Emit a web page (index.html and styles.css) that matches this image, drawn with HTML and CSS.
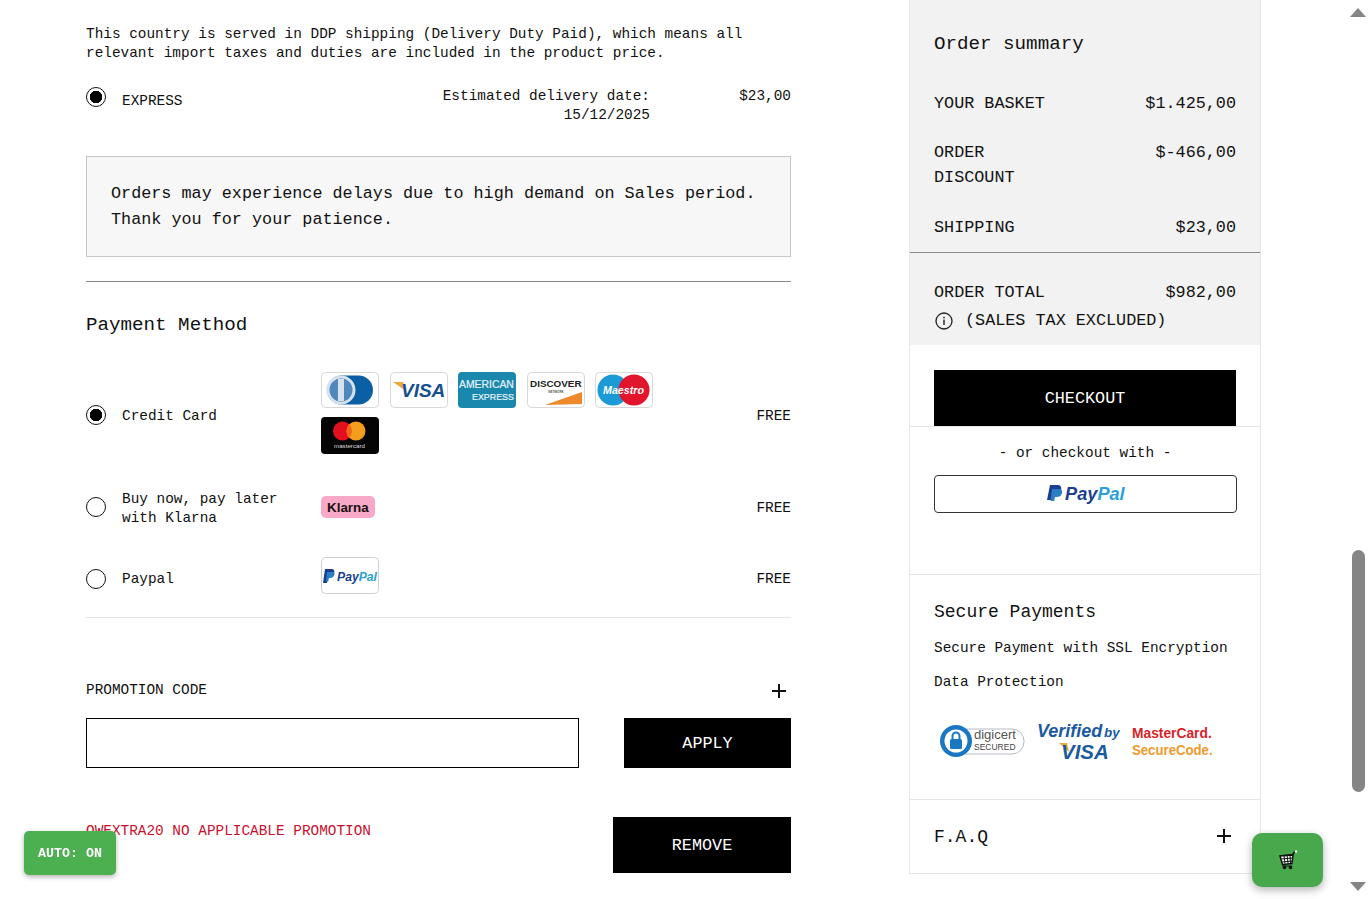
FILE: index.html
```html
<!DOCTYPE html>
<html lang="en">
<head>
    <meta charset="UTF-8">
    <meta name="viewport" content="width=device-width, initial-scale=1.0">
    <title>Checkout</title>
    <link rel="stylesheet" href="styles.css">
</head>
<body>
    <div class="page">
        <main class="checkout-left">
            <p class="ddp-note">This country is served in DDP shipping (Delivery Duty Paid), which means all relevant import taxes and duties are included in the product price.</p>

            <div class="shipping-row">
                <span class="radio checked"></span>
                <span class="shipping-name">EXPRESS</span>
                <span class="shipping-date">Estimated delivery date:<br>15/12/2025</span>
                <span class="shipping-price">$23,00</span>
            </div>

            <div class="delay-box">Orders may experience delays due to high demand on Sales period. Thank you for your patience.</div>

            <h2 class="section-title">Payment Method</h2>

            <div class="pay-row pay-row-card">
                <span class="radio checked"></span>
                <span class="pay-name">Credit Card</span>
                <div class="pay-logos">
                    <svg class="card" viewBox="0 0 58 36"><rect x=".5" y=".5" width="57" height="35" rx="4" fill="#fff" stroke="#d8d8d8"/><rect x="6" y="3.500" width="46" height="29" rx="14.500" fill="#0b5fa5"/><circle cx="20" cy="18" r="14.500" fill="#d5e2ee"/><circle cx="20" cy="18" r="11.500" fill="#4f88bb"/><rect x="17" y="7" width="6" height="22" fill="#d5e2ee"/></svg>
                    <svg class="card" viewBox="0 0 58 36"><rect x=".5" y=".5" width="57" height="35" rx="4" fill="#fff" stroke="#d8d8d8"/><path d="M3 10h10l3 9z" fill="#f0a83a"/><text x="11" y="25" class="logo-text visa-text">VISA</text></svg>
                    <svg class="card" viewBox="0 0 58 36"><rect width="58" height="36" rx="4" fill="#1a87ad"/><text x="1" y="16" class="logo-text amex-text">AMERICAN</text><text x="14" y="28" class="logo-text amex-text amex-small">EXPRESS</text></svg>
                    <svg class="card" viewBox="0 0 58 36"><rect x=".5" y=".5" width="57" height="35" rx="4" fill="#fff" stroke="#d8d8d8"/><path d="M18 33L55 32V20z" fill="#ee8a2c"/><text x="3" y="15" class="logo-text disc-text">DISCOVER</text><text x="29" y="21" class="logo-text disc-small" text-anchor="middle">NETWORK</text></svg>
                    <svg class="card" viewBox="0 0 58 36"><rect x=".5" y=".5" width="57" height="35" rx="4" fill="#fff" stroke="#d8d8d8"/><circle cx="18" cy="18" r="15.500" fill="#1b9ad6"/><circle cx="39" cy="18" r="15.500" fill="#e2152c"/><text x="8" y="22" class="logo-text maestro-text">Maestro</text></svg>
                    <svg class="card card-tall" viewBox="0 0 58 37"><rect width="58" height="37" rx="4" fill="#050505"/><circle cx="21.500" cy="14" r="9.500" fill="#e2101f"/><circle cx="35" cy="14" r="9.500" fill="#f59d1d"/><path d="M28.250 7.300a9.500 9.500 0 0 1 0 13.400a9.500 9.500 0 0 1 0-13.400z" fill="#f2661c"/><text x="13" y="31" class="logo-text mc-text">mastercard</text></svg>
                </div>
                <span class="pay-free">FREE</span>
            </div>

            <div class="pay-row pay-row-klarna">
                <span class="radio"></span>
                <span class="pay-name">Buy now, pay later<br>with Klarna</span>
                <div class="pay-logos">
                    <svg class="klarna" viewBox="0 0 54 22"><rect width="54" height="22" rx="5" fill="#f9a9c8"/><text x="6" y="16" class="logo-text klarna-text">Klarna</text></svg>
                </div>
                <span class="pay-free">FREE</span>
            </div>

            <div class="pay-row pay-row-paypal">
                <span class="radio"></span>
                <span class="pay-name">Paypal</span>
                <div class="pay-logos">
                    <svg class="card card-tall" viewBox="0 0 58 37"><rect x=".5" y=".5" width="57" height="36" rx="4" fill="#fff" stroke="#cfcfcf"/><path d="M4 12h6c3 0 4 2 3 4.500c-1 2.500-3 3.500-6 3.500l-1 6H2z" fill="#1b3f8f"/><path d="M6 15h6c1.500 0 1.800 1.500 1.300 3c-.8 2.500-2.800 3-5.300 3l-.8 3.500H5z" fill="#2a7fc4"/><text x="16" y="24" class="logo-text pp-small"><tspan fill="#1b3f8f">Pay</tspan><tspan fill="#2a9fd8">Pal</tspan></text></svg>
                </div>
                <span class="pay-free">FREE</span>
            </div>

            <div class="promo-head">
                <span>PROMOTION CODE</span>
                <span class="plus"></span>
            </div>
            <div class="promo-form">
                <input type="text" class="promo-input">
                <button class="black-btn apply-btn">APPLY</button>
            </div>
            <div class="promo-applied">
                <span class="promo-error">OWEXTRA20 NO APPLICABLE PROMOTION</span>
                <button class="black-btn remove-btn">REMOVE</button>
            </div>
        </main>

        <aside class="checkout-right">
            <section class="summary">
                <h2 class="section-title">Order summary</h2>
                <div class="sum-row"><span>YOUR BASKET</span><span>$1.425,00</span></div>
                <div class="sum-row sum-discount"><span>ORDER<br>DISCOUNT</span><span>$-466,00</span></div>
                <div class="sum-row sum-shipping"><span>SHIPPING</span><span>$23,00</span></div>
                <div class="sum-total">
                    <div class="sum-row"><span>ORDER TOTAL</span><span>$982,00</span></div>
                    <div class="tax-note">
                        <svg viewBox="0 0 18 18" width="18" height="18"><circle cx="9" cy="9" r="8" fill="none" stroke="#222" stroke-width="1.300"/><rect x="8.300" y="7.500" width="1.400" height="5.500" fill="#222"/><rect x="8.300" y="4.800" width="1.400" height="1.500" fill="#222"/></svg>
                        <span>(SALES TAX EXCLUDED)</span>
                    </div>
                </div>
            </section>

            <section class="checkout-actions">
                <button class="black-btn checkout-btn">CHECKOUT</button>
            </section>

            <section class="express-pay">
                <p class="or-text">- or checkout with -</p>
                <div class="paypal-btn">
                    <svg viewBox="0 0 78 22" width="78" height="22"><path d="M3 2h7c3.500 0 5 2 4 5c-1 3-3 4.500-6.500 4.500H6L5 17H0z" fill="#1b3f8f"/><path d="M5 6h7c2.500 0 3.500 1.500 3 4c-.8 3-2.800 4-5.300 4H8l-.8 4H3.500z" fill="#2a7fc4"/><text x="18" y="17" class="logo-text pp-big"><tspan fill="#1b3f8f">Pay</tspan><tspan fill="#2a9fd8">Pal</tspan></text></svg>
                </div>
            </section>

            <section class="secure">
                <h2 class="section-title">Secure Payments</h2>
                <p>Secure Payment with SSL Encryption</p>
                <p>Data Protection</p>
                <div class="secure-logos">
                    <svg viewBox="0 0 86 34" width="86" height="34"><rect x="14" y="5" width="71" height="25" rx="12" fill="#fff" stroke="#b5bcc4"/><circle cx="17" cy="17" r="16" fill="#1c77c3"/><circle cx="17" cy="17" r="11.500" fill="#fff"/><rect x="11" y="15" width="12" height="10" rx="1.500" fill="#1c77c3"/><path d="M13.500 15v-3a3.500 3.500 0 0 1 7 0v3" fill="none" stroke="#1c77c3" stroke-width="2"/><text x="35" y="15" class="logo-text digi-top">digicert</text><text x="35" y="26" class="logo-text digi-bottom">SECURED</text></svg>
                    <svg viewBox="0 0 84 44" width="84" height="44"><text x="1" y="18" class="logo-text vbv-top">Verified</text><text x="68" y="18" class="logo-text vbv-by">by</text><path d="M23 24h8l2 9z" fill="#f0a83a"/><text x="25" y="40" class="logo-text vbv-visa">VISA</text></svg>
                    <svg viewBox="0 0 84 36" width="84" height="36"><text transform="translate(1 14.500) scale(.92 1)" class="logo-text msc-top">MasterCard.</text><text transform="translate(1 32) scale(.88 1)" class="logo-text msc-bottom">SecureCode.</text></svg>
                </div>
            </section>

            <section class="faq">
                <span>F.A.Q</span>
                <span class="plus"></span>
            </section>
        </aside>
    </div>

    <div class="fake-scrollbar">
        <span class="arrow-up"></span>
        <span class="scroll-thumb"></span>
        <span class="arrow-down"></span>
    </div>

    <button class="auto-btn">AUTO: ON</button>
    <button class="cart-btn">
        <svg viewBox="0 0 20 20" width="20" height="20"><path d="M2 6l12.500-1.500l3-3.500" fill="none" stroke="#111" stroke-width="1.500"/><circle cx="18" cy="1.500" r="1.200" fill="#fff"/><path d="M2 6l2.500 8.500l9.500-1l1-8.500z" fill="#fff" stroke="#111" stroke-width="1.500"/><path d="M3 9l11-1M4 12l10-1M6 5.500l1 8M9 5l1 8M12 5l.5 8" stroke="#111"/><path d="M4.500 14.500l.5 1.500h9" fill="none" stroke="#111" stroke-width="1.200"/><circle cx="6.500" cy="17.500" r="1.800" fill="#111"/><circle cx="12.500" cy="17.500" r="1.800" fill="#111"/></svg>
    </button>
</body>
</html>
```

FILE: styles.css
```css
html, body {
    margin: 0;
    height: 899px;
    overflow: hidden;
    background-color: #ffffff;
}

body {
    font-family: "Liberation Mono", monospace;
    font-size: 14.4px;
    color: #111111;
}

p {
    margin: 0;
}

.page {
    display: flex;
    gap: 118px;
    padding-left: 86px;
}

.section-title {
    margin: 0;
    font-size: 19.2px;
    font-weight: normal;
    line-height: 24px;
}

.logo-text {
    font-family: "Liberation Sans", sans-serif;
    font-weight: bold;
}

/* Left column */
.checkout-left {
    width: 705px;
    padding-top: 25px;
}

.ddp-note {
    line-height: 19px;
}

.radio {
    flex: none;
    box-sizing: border-box;
    width: 20px;
    height: 20px;
    border: 1.5px solid #111111;
    border-radius: 50%;
    background-color: #ffffff;
}

.radio.checked {
    background: radial-gradient(circle, #000000 0 6px, #ffffff 6.5px);
}

.shipping-row {
    display: flex;
    align-items: flex-start;
    margin-top: 24px;
    height: 69px;
    line-height: 19px;
}

.shipping-name {
    margin: 5px 0 0 16px;
    width: 213px;
}

.shipping-date {
    width: 315px;
    text-align: right;
}

.shipping-price {
    flex: 1;
    text-align: right;
}

.delay-box {
    box-sizing: border-box;
    height: 101px;
    padding: 24px 24px 0;
    border: 1px solid #c8c8c8;
    background-color: #f7f7f7;
    font-size: 16.8px;
    line-height: 26px;
}

.checkout-left .section-title {
    margin-top: 24px;
    padding-top: 31px;
    border-top: 1px solid #8a8a8a;
}

.pay-row {
    display: flex;
    align-items: center;
}

.pay-row-card {
    margin-top: 35px;
    height: 86px;
}

.pay-row-klarna {
    margin-top: 30px;
    height: 38px;
}

.pay-row-paypal {
    margin-top: 31px;
    height: 42px;
}

.pay-row-card .pay-logos,
.pay-row-paypal .pay-logos {
    align-self: flex-start;
}

.pay-row-paypal .radio {
    margin-top: 2px;
}

.pay-name {
    box-sizing: border-box;
    width: 199px;
    margin-left: 16px;
    padding-top: 2px;
    line-height: 19px;
}

.pay-row-klarna .pay-name {
    padding-top: 4px;
}

.pay-logos {
    display: flex;
    flex-wrap: wrap;
    gap: 9px 10.5px;
    width: 350px;
}

.card {
    width: 58px;
    height: 36px;
}

.card-tall {
    height: 37px;
}

.klarna {
    width: 54px;
    height: 22px;
}

.pay-free {
    flex: 1;
    padding-top: 2px;
    text-align: right;
}

.visa-text { font-size: 19px; font-style: italic; fill: #15508f; }
.amex-text { font-size: 10.4px; font-weight: normal; fill: #e6f3f8; stroke: #e6f3f8; stroke-width: .2px; }
.amex-small { font-size: 8.9px; }
.disc-text { font-size: 9.9px; fill: #222222; }
.disc-small { font-size: 3px; fill: #555555; }
.maestro-text { font-size: 10.7px; font-style: italic; fill: #ffffff; }
.mc-text { font-size: 6.2px; font-weight: normal; fill: #dddddd; }
.klarna-text { font-size: 13.4px; fill: #17120f; }
.pp-small { font-size: 12.2px; font-style: italic; }
.pp-big { font-size: 18.2px; font-style: italic; }

.promo-head {
    display: flex;
    justify-content: space-between;
    align-items: center;
    margin-top: 18px;
    padding-top: 62px;
    border-top: 1px solid #e6e6e6;
    height: 19px;
}

.plus {
    position: relative;
    display: block;
    width: 14px;
    height: 14px;
    background:
        linear-gradient(#111111, #111111) center / 14px 2px no-repeat,
        linear-gradient(#111111, #111111) center / 2px 14px no-repeat;
}

.promo-head .plus {
    top: 1px;
    right: 5px;
}

.promo-form {
    display: flex;
    justify-content: space-between;
    margin-top: 19px;
}

.promo-input {
    box-sizing: border-box;
    width: 493px;
    height: 50px;
    border: 1px solid #000000;
    border-radius: 0;
}

.black-btn {
    border: none;
    background-color: #000000;
    color: #ffffff;
    font-family: "Liberation Mono", monospace;
    font-size: 16.8px;
    cursor: pointer;
}

.apply-btn {
    width: 167px;
    height: 50px;
}

.promo-applied {
    display: flex;
    justify-content: space-between;
    align-items: flex-start;
    margin-top: 49px;
}

.promo-error {
    margin-top: 5px;
    color: #c8102e;
    line-height: 19px;
}

.remove-btn {
    width: 178px;
    height: 56px;
}

/* Right column */
.checkout-right {
    box-sizing: border-box;
    width: 352px;
    height: 874px;
    border: 1px solid #e6e6e6;
    border-top: none;
}

.summary {
    height: 345px;
    background-color: #f2f2f2;
    font-size: 16.8px;
    line-height: 25px;
}

.summary .section-title {
    padding: 32px 24px 0;
}

.sum-row {
    display: flex;
    justify-content: space-between;
    padding: 0 24px;
}

.summary > .sum-row:nth-child(2) {
    margin-top: 35px;
}

.sum-discount {
    margin-top: 24px;
}

.sum-shipping {
    margin-top: 25px;
}

.sum-total {
    margin-top: 12px;
    padding-top: 27px;
    border-top: 1px solid #8a8a8a;
}

.tax-note {
    display: flex;
    align-items: center;
    gap: 12px;
    margin-top: 3px;
    padding-left: 25px;
}

.checkout-actions {
    padding: 25px 24px 0;
    height: 56px;
    border-bottom: 1px solid #e6e6e6;
}

.checkout-btn {
    display: block;
    width: 302px;
    height: 56px;
}

.express-pay {
    box-sizing: border-box;
    height: 148px;
    padding: 17px 24px 0;
    border-bottom: 1px solid #e6e6e6;
}

.or-text {
    text-align: center;
    line-height: 19px;
}

.paypal-btn {
    display: flex;
    justify-content: center;
    align-items: center;
    box-sizing: border-box;
    width: 303px;
    height: 38px;
    margin-top: 12px;
    border: 1px solid #333333;
    border-radius: 4px;
}

.secure {
    box-sizing: border-box;
    height: 225px;
    padding: 25px 24px 0;
    border-bottom: 1px solid #e6e6e6;
}

.secure .section-title {
    font-size: 18px;
}

.secure p {
    margin-top: 12px;
    line-height: 22px;
}

.secure .section-title + p {
    margin-top: 13px;
}

.secure-logos {
    display: flex;
    align-items: center;
    gap: 11px;
    margin: 26px 0 0 5px;
}

.digi-top { font-size: 13px; font-weight: normal; fill: #555555; }
.digi-bottom { font-size: 8.5px; font-weight: normal; fill: #444444; }
.vbv-top { font-size: 18px; font-style: italic; fill: #1a5aa0; }
.vbv-by { font-size: 13.5px; font-style: italic; fill: #1a5aa0; }
.vbv-visa { font-size: 20.5px; font-style: italic; fill: #1a5aa0; }
.msc-top { font-size: 15px; fill: #d8232a; }
.msc-bottom { font-size: 15px; fill: #ef9a2d; }

.faq {
    display: flex;
    justify-content: space-between;
    align-items: center;
    height: 74px;
    padding: 0 29px 0 24px;
    font-size: 18px;
}

.faq .plus {
    top: -1px;
}

/* Scrollbar and floating buttons */
.fake-scrollbar {
    position: fixed;
    top: 0;
    right: 0;
    width: 20px;
    height: 899px;
    background-color: #ffffff;
}

.scroll-thumb {
    position: absolute;
    top: 550px;
    left: 2px;
    width: 13px;
    height: 242px;
    border-radius: 7px;
    background-color: #858585;
}

.arrow-up,
.arrow-down {
    position: absolute;
    left: 0;
    border-left: 8.5px solid transparent;
    border-right: 8.5px solid transparent;
}

.arrow-up {
    top: 8px;
    border-bottom: 9px solid #858585;
}

.arrow-down {
    bottom: 8px;
    border-top: 9px solid #858585;
}

.auto-btn {
    position: fixed;
    left: 24px;
    top: 831px;
    width: 92px;
    height: 44px;
    border: none;
    border-radius: 5px;
    background-color: #4caf50;
    color: #ffffff;
    font-family: "Liberation Mono", monospace;
    font-size: 13.3px;
    font-weight: bold;
    box-shadow: 0 2px 5px rgba(0, 0, 0, 0.3);
}

.cart-btn {
    position: fixed;
    left: 1252px;
    top: 833px;
    display: flex;
    justify-content: center;
    align-items: center;
    width: 71px;
    height: 54px;
    border: none;
    border-radius: 10px;
    background-color: #48a84c;
    box-shadow: 0 3px 8px rgba(0, 0, 0, 0.3);
}
```
